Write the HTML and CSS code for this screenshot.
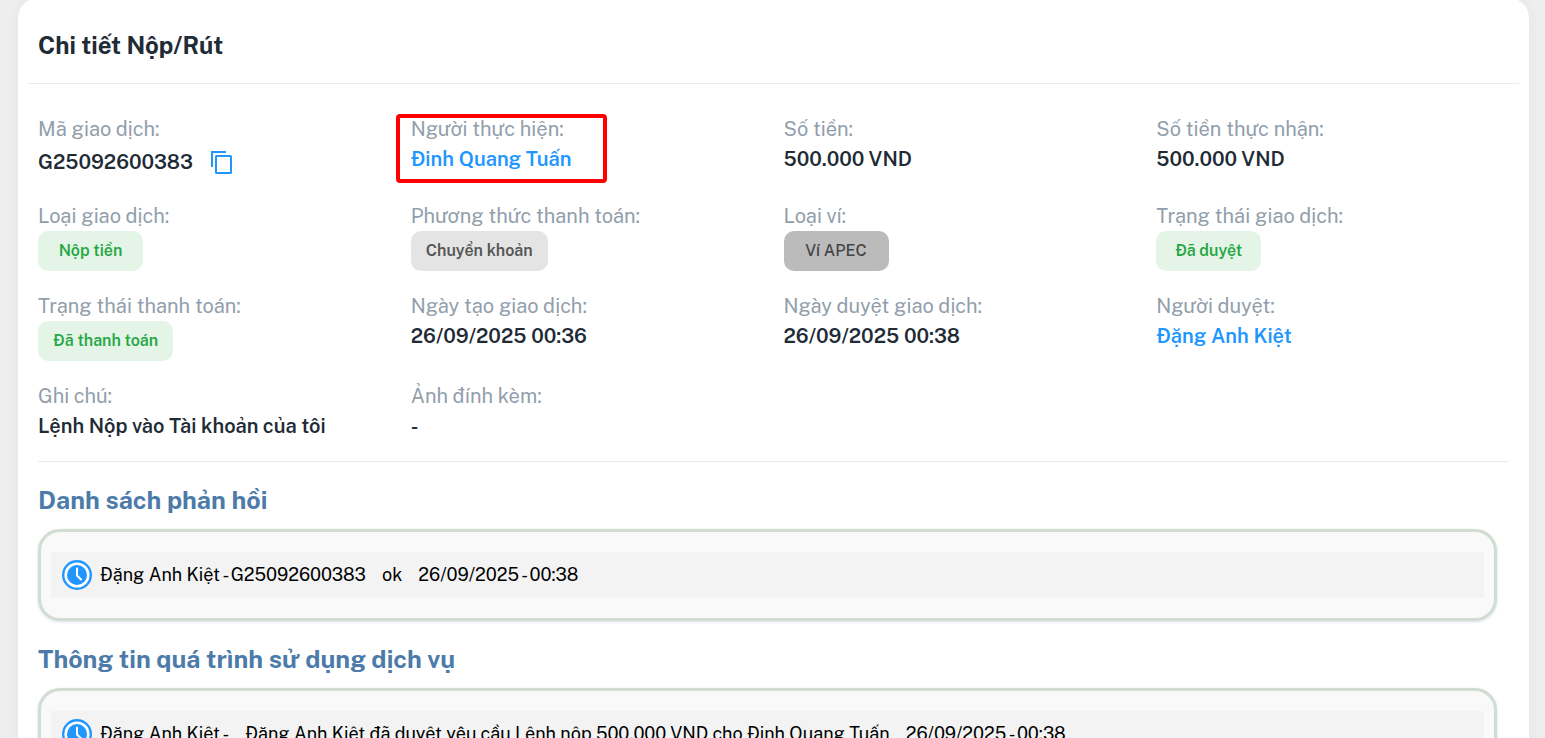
FILE: index.html
```html
<!DOCTYPE html>
<html lang="vi">
<head>
    <meta charset="UTF-8">
    <meta name="viewport" content="width=device-width, initial-scale=1">
    <title>Chi tiết Nộp/Rút</title>
    <link rel="stylesheet" href="styles.css">
</head>
<body>

<svg class="sprite" width="0" height="0" aria-hidden="true">
    <symbol id="clock" viewBox="0 0 30 30">
        <circle cx="15" cy="15" r="13.8" fill="#fff" stroke="#2196ff" stroke-width="2.4"/>
        <circle cx="15" cy="15" r="10" fill="#2196ff"/>
        <path d="M15 8.5v7l4 4" fill="none" stroke="#fff" stroke-width="2" stroke-linecap="round" stroke-linejoin="round"/>
    </symbol>
</svg>

<main class="card">
    <div class="card-header">
        <h1 class="card-title">Chi tiết Nộp/Rút</h1>
    </div>

    <div class="detail">
        <div class="item">
            <div class="label">Mã giao dịch:</div>
            <div class="value value-copy">
                <span>G25092600383</span>
                <button type="button" class="copy" aria-label="Copy">
                    <svg width="22" height="24" viewBox="0 0 22 24" fill="none" stroke="#2196ff" stroke-width="2">
                        <path d="M15 2H1v15"/>
                        <rect x="5" y="6" width="15" height="17" rx="0.6"/>
                    </svg>
                </button>
            </div>
        </div>
        <div class="item item-marked">
            <div class="label">Người thực hiện:</div>
            <div class="value"><a href="#">Đinh Quang Tuấn</a></div>
        </div>
        <div class="item">
            <div class="label">Số tiền:</div>
            <div class="value">500.000 VND</div>
        </div>
        <div class="item">
            <div class="label">Số tiền thực nhận:</div>
            <div class="value">500.000 VND</div>
        </div>

        <div class="item">
            <div class="label">Loại giao dịch:</div>
            <span class="badge badge-green">Nộp tiền</span>
        </div>
        <div class="item">
            <div class="label">Phương thức thanh toán:</div>
            <span class="badge badge-light">Chuyển khoản</span>
        </div>
        <div class="item">
            <div class="label">Loại ví:</div>
            <span class="badge badge-grey">Ví APEC</span>
        </div>
        <div class="item">
            <div class="label">Trạng thái giao dịch:</div>
            <span class="badge badge-green">Đã duyệt</span>
        </div>

        <div class="item">
            <div class="label">Trạng thái thanh toán:</div>
            <span class="badge badge-green">Đã thanh toán</span>
        </div>
        <div class="item">
            <div class="label">Ngày tạo giao dịch:</div>
            <div class="value">26/09/2025 00:36</div>
        </div>
        <div class="item">
            <div class="label">Ngày duyệt giao dịch:</div>
            <div class="value">26/09/2025 00:38</div>
        </div>
        <div class="item">
            <div class="label">Người duyệt:</div>
            <div class="value"><a href="#">Đặng Anh Kiệt</a></div>
        </div>

        <div class="item">
            <div class="label">Ghi chú:</div>
            <div class="value">Lệnh Nộp vào Tài khoản của tôi</div>
        </div>
        <div class="item">
            <div class="label">Ảnh đính kèm:</div>
            <div class="value">-</div>
        </div>
    </div>

    <div class="history">
        <h2 class="history-title">Danh sách phản hồi</h2>
        <div class="history-box">
            <div class="log">
                <svg class="log-icon"><use href="#clock"/></svg>
                <span>Đặng Anh Kiệt - G25092600383</span>
                <span>ok</span>
                <span>26/09/2025 - 00:38</span>
            </div>
        </div>

        <h2 class="history-title">Thông tin quá trình sử dụng dịch vụ</h2>
        <div class="history-box">
            <div class="log">
                <svg class="log-icon"><use href="#clock"/></svg>
                <span>Đặng Anh Kiệt -</span>
                <span>Đặng Anh Kiệt đã duyệt yêu cầu Lệnh nộp 500.000 VND cho Đinh Quang Tuấn</span>
                <span>26/09/2025 - 00:38</span>
            </div>
        </div>
    </div>
</main>

</body>
</html>
```
FILE: styles.css
```css
* {
    box-sizing: border-box;
}

body {
    margin: 0;
    height: 100vh;
    overflow: hidden;
    padding: 0 16px 0 18px;
    background: #eeeeee;
    color: #212b36;
    font-family: "Public Sans", Inter, sans-serif;
    font-size: 20px;
    line-height: 30px;
}

h1, h2 {
    margin: 0;
}

a {
    color: #2196ff;
    text-decoration: none;
}

.sprite {
    position: absolute;
}

.card {
    min-height: 100%;
    margin-top: -2px;
    padding: 0 10px 40px;
    background: #ffffff;
    border-radius: 20px 20px 0 0;
    box-shadow: 0 0 16px rgba(0, 0, 0, 0.04);
}

.card-header {
    padding: 32px 10px 23px;
    border-bottom: 1px solid #e9eaeb;
}

.card-title {
    font-size: 24px;
    font-weight: 700;
    line-height: 30px;
}

.detail {
    display: grid;
    grid-template-columns: repeat(4, 1fr);
    row-gap: 20px;
    padding: 30px 0 20px;
}

.item {
    position: relative;
    padding: 0 10px;
}

/* red frame over the item */
.item-marked::after {
    content: "";
    box-sizing: border-box;
    position: absolute;
    top: 0;
    left: -5px;
    width: 211px;
    height: 69px;
    border: 4px solid #ff0000;
    border-radius: 4px;
    pointer-events: none;
}

.label {
    color: #919eab;
}

.value {
    font-weight: 600;
}

.value-copy {
    display: flex;
    align-items: center;
    gap: 18px;
    height: 37px;
    padding-bottom: 2px;
}

.copy {
    display: flex;
    padding: 0;
    border: 0;
    background: none;
    cursor: pointer;
}

.badge {
    display: flex;
    align-items: center;
    justify-content: center;
    width: fit-content;
    min-width: 105px;
    height: 40px;
    padding: 0 15px;
    border-radius: 10px;
    font-size: 16px;
    font-weight: 600;
}

.badge-green {
    background: #e4f5e8;
    color: #28a745;
}

.badge-light {
    background: #e4e4e4;
    color: #555555;
}

.badge-grey {
    background: #bbbbbb;
    color: #444444;
    font-weight: 500;
}

.history {
    margin: 0 10px;
    border-top: 1px solid #e9eaeb;
}

.history-title {
    padding: 23px 0 14px;
    color: #4c7ba9;
    font-size: 25px;
    font-weight: 700;
    line-height: 30px;
}

.history-box {
    margin-right: 12px;
    padding: 20px 10px;
    border: 3px solid #d1ddd0;
    border-radius: 22px;
    background: #f9f9f9;
    box-shadow: 0 1px 3px rgba(60, 90, 130, 0.2);
}

.log {
    display: flex;
    align-items: center;
    gap: 16px;
    height: 46px;
    padding: 0 11px;
    background: #f3f3f3;
    color: #000000;
    font-size: 18px;
}

.log-icon {
    width: 30px;
    height: 30px;
    margin-right: -8px;
}
```
